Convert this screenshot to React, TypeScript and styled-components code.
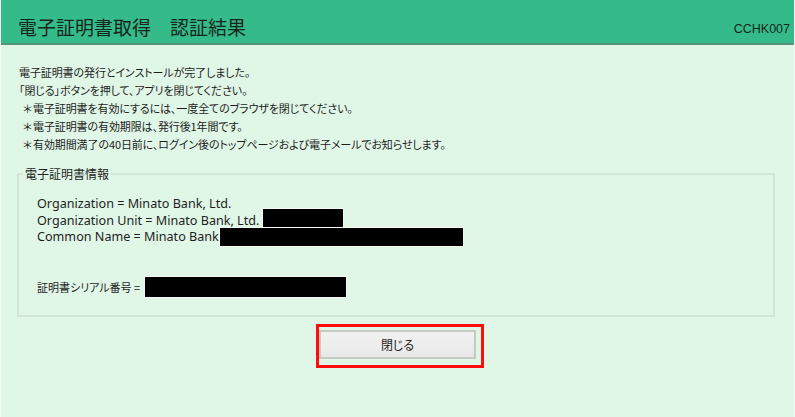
import React from "react";
import styled, { createGlobalStyle } from "styled-components";

const GlobalStyle = createGlobalStyle`
  html, body {
    margin: 0;
    padding: 0;
    background: #e0f6e6;
  }
  body {
    font-family: "Noto Sans CJK JP", "Noto Sans", sans-serif;
    color: #1e1e1e;
  }
`;

const Page = styled.div`
  width: 795px;
  height: 417px;
  background: #e0f6e6;
  border-left: 1px solid #f2fbf4;
  border-right: 1px solid #f2fbf4;
  box-sizing: border-box;
  overflow: hidden;
`;

const Header = styled.header`
  height: 43px;
  background: #34bb89;
  border-bottom: 2px solid #56937a;
  display: flex;
  align-items: flex-end;
  justify-content: space-between;
  padding: 0 4px 0 17px;
`;

const Title = styled.h1`
  margin: 0 0 3px 0;
  font-family: "Noto Sans CJK JP", sans-serif;
  font-weight: 400;
  font-size: 19px;
  line-height: 26px;
  color: #17261d;
  white-space: pre;
`;

const ScreenCode = styled.span`
  font-family: "Liberation Sans", Arial, sans-serif;
  font-size: 12.5px;
  line-height: 14px;
  margin-bottom: 7px;
  color: #17261d;
`;

const Content = styled.main`
  padding: 18px 0 0 18px;
`;

const Message = styled.p`
  margin: 0;
  font-size: 11px;
  letter-spacing: -0.1px;
  line-height: 18px;
  font-feature-settings: "palt";
  color: #1e1e1e;
  white-space: nowrap;
`;

const Note = styled(Message)`
  &::before {
    content: "＊";
    display: inline-block;
    width: 11px;
    margin-left: 3px;
    text-align: center;
  }
`;

const InfoBox = styled.fieldset`
  margin: 13px 19px 0 -2px;
  padding: 14px 0 19px 18px;
  border: 2px solid #d3e6d6;
  border-radius: 1px;
`;

const Legend = styled.legend`
  margin-left: -14px;
  padding: 0 2px;
  font-size: 12px;
  line-height: 16px;
  font-feature-settings: "palt";
  color: #1e1e1e;
`;

const CertLine = styled.div`
  font-family: "Noto Sans", "Noto Sans CJK JP", sans-serif;
  font-size: 12.6px;
  line-height: 16.5px;
  height: 16.5px;
  color: #1e1e1e;
  white-space: nowrap;
`;

const SerialLine = styled(CertLine)`
  margin-top: 33.5px;
  font-family: "Noto Sans CJK JP", sans-serif;
  font-size: 11px;
  font-feature-settings: "palt";
`;

const Redacted = styled.span<{ $w: number; $gap: number; $h: number; $below: number }>`
  display: inline-block;
  width: ${(p) => p.$w}px;
  height: ${(p) => p.$h}px;
  margin: 0 0 ${(p) => -p.$below}px ${(p) => p.$gap}px;
  margin-top: ${(p) => -(p.$h - p.$below)}px;
  background: #000;
  vertical-align: baseline;
  box-shadow: 0 0 0 1px #f4f8f4;
`;

const ButtonRow = styled.div`
  display: flex;
  justify-content: center;
  margin-top: 7px;
  margin-left: -18px;
`;

const Highlight = styled.div`
  margin-left: 5px;
  border: 3px solid #ff0d0d;
  padding: 3px 5px 6px 0;
  display: flex;
`;

const CloseButton = styled.button`
  width: 157px;
  height: 29px;
  background: linear-gradient(#f1f1f1, #ececec 70%, #e6e6e6);
  border: 2px solid #c3cbc3;
  font-family: "Noto Sans CJK JP", sans-serif;
  font-size: 12px;
  color: #222;
  font-feature-settings: "palt";
  padding: 0;
  cursor: pointer;
`;

export default function App() {
  return (
    <>
      <GlobalStyle />
      <Page>
        <Header>
          <Title>{"電子証明書取得　認証結果"}</Title>
          <ScreenCode>CCHK007</ScreenCode>
        </Header>
        <Content>
          <Message>電子証明書の発行とインストールが完了しました。</Message>
          <Message>「閉じる」ボタンを押して、アプリを閉じてください。</Message>
          <Note>電子証明書を有効にするには、一度全てのブラウザを閉じてください。</Note>
          <Note>電子証明書の有効期限は、発行後1年間です。</Note>
          <Note>有効期間満了の40日前に、ログイン後のトップページおよび電子メールでお知らせします。</Note>
          <InfoBox>
            <Legend>電子証明書情報</Legend>
            <CertLine>Organization = Minato Bank, Ltd.</CertLine>
            <CertLine>
              Organization Unit = Minato Bank, Ltd.
              <Redacted $w={80} $gap={4} $h={19} $below={3} />
            </CertLine>
            <CertLine>
              Common Name = Minato Bank
              <Redacted $w={243} $gap={1} $h={18} $below={5} />
            </CertLine>
            <SerialLine>
              証明書シリアル番号 =
              <Redacted $w={201} $gap={5} $h={20} $below={5} />
            </SerialLine>
          </InfoBox>
          <ButtonRow>
            <Highlight>
              <CloseButton type="button">閉じる</CloseButton>
            </Highlight>
          </ButtonRow>
        </Content>
      </Page>
    </>
  );
}
